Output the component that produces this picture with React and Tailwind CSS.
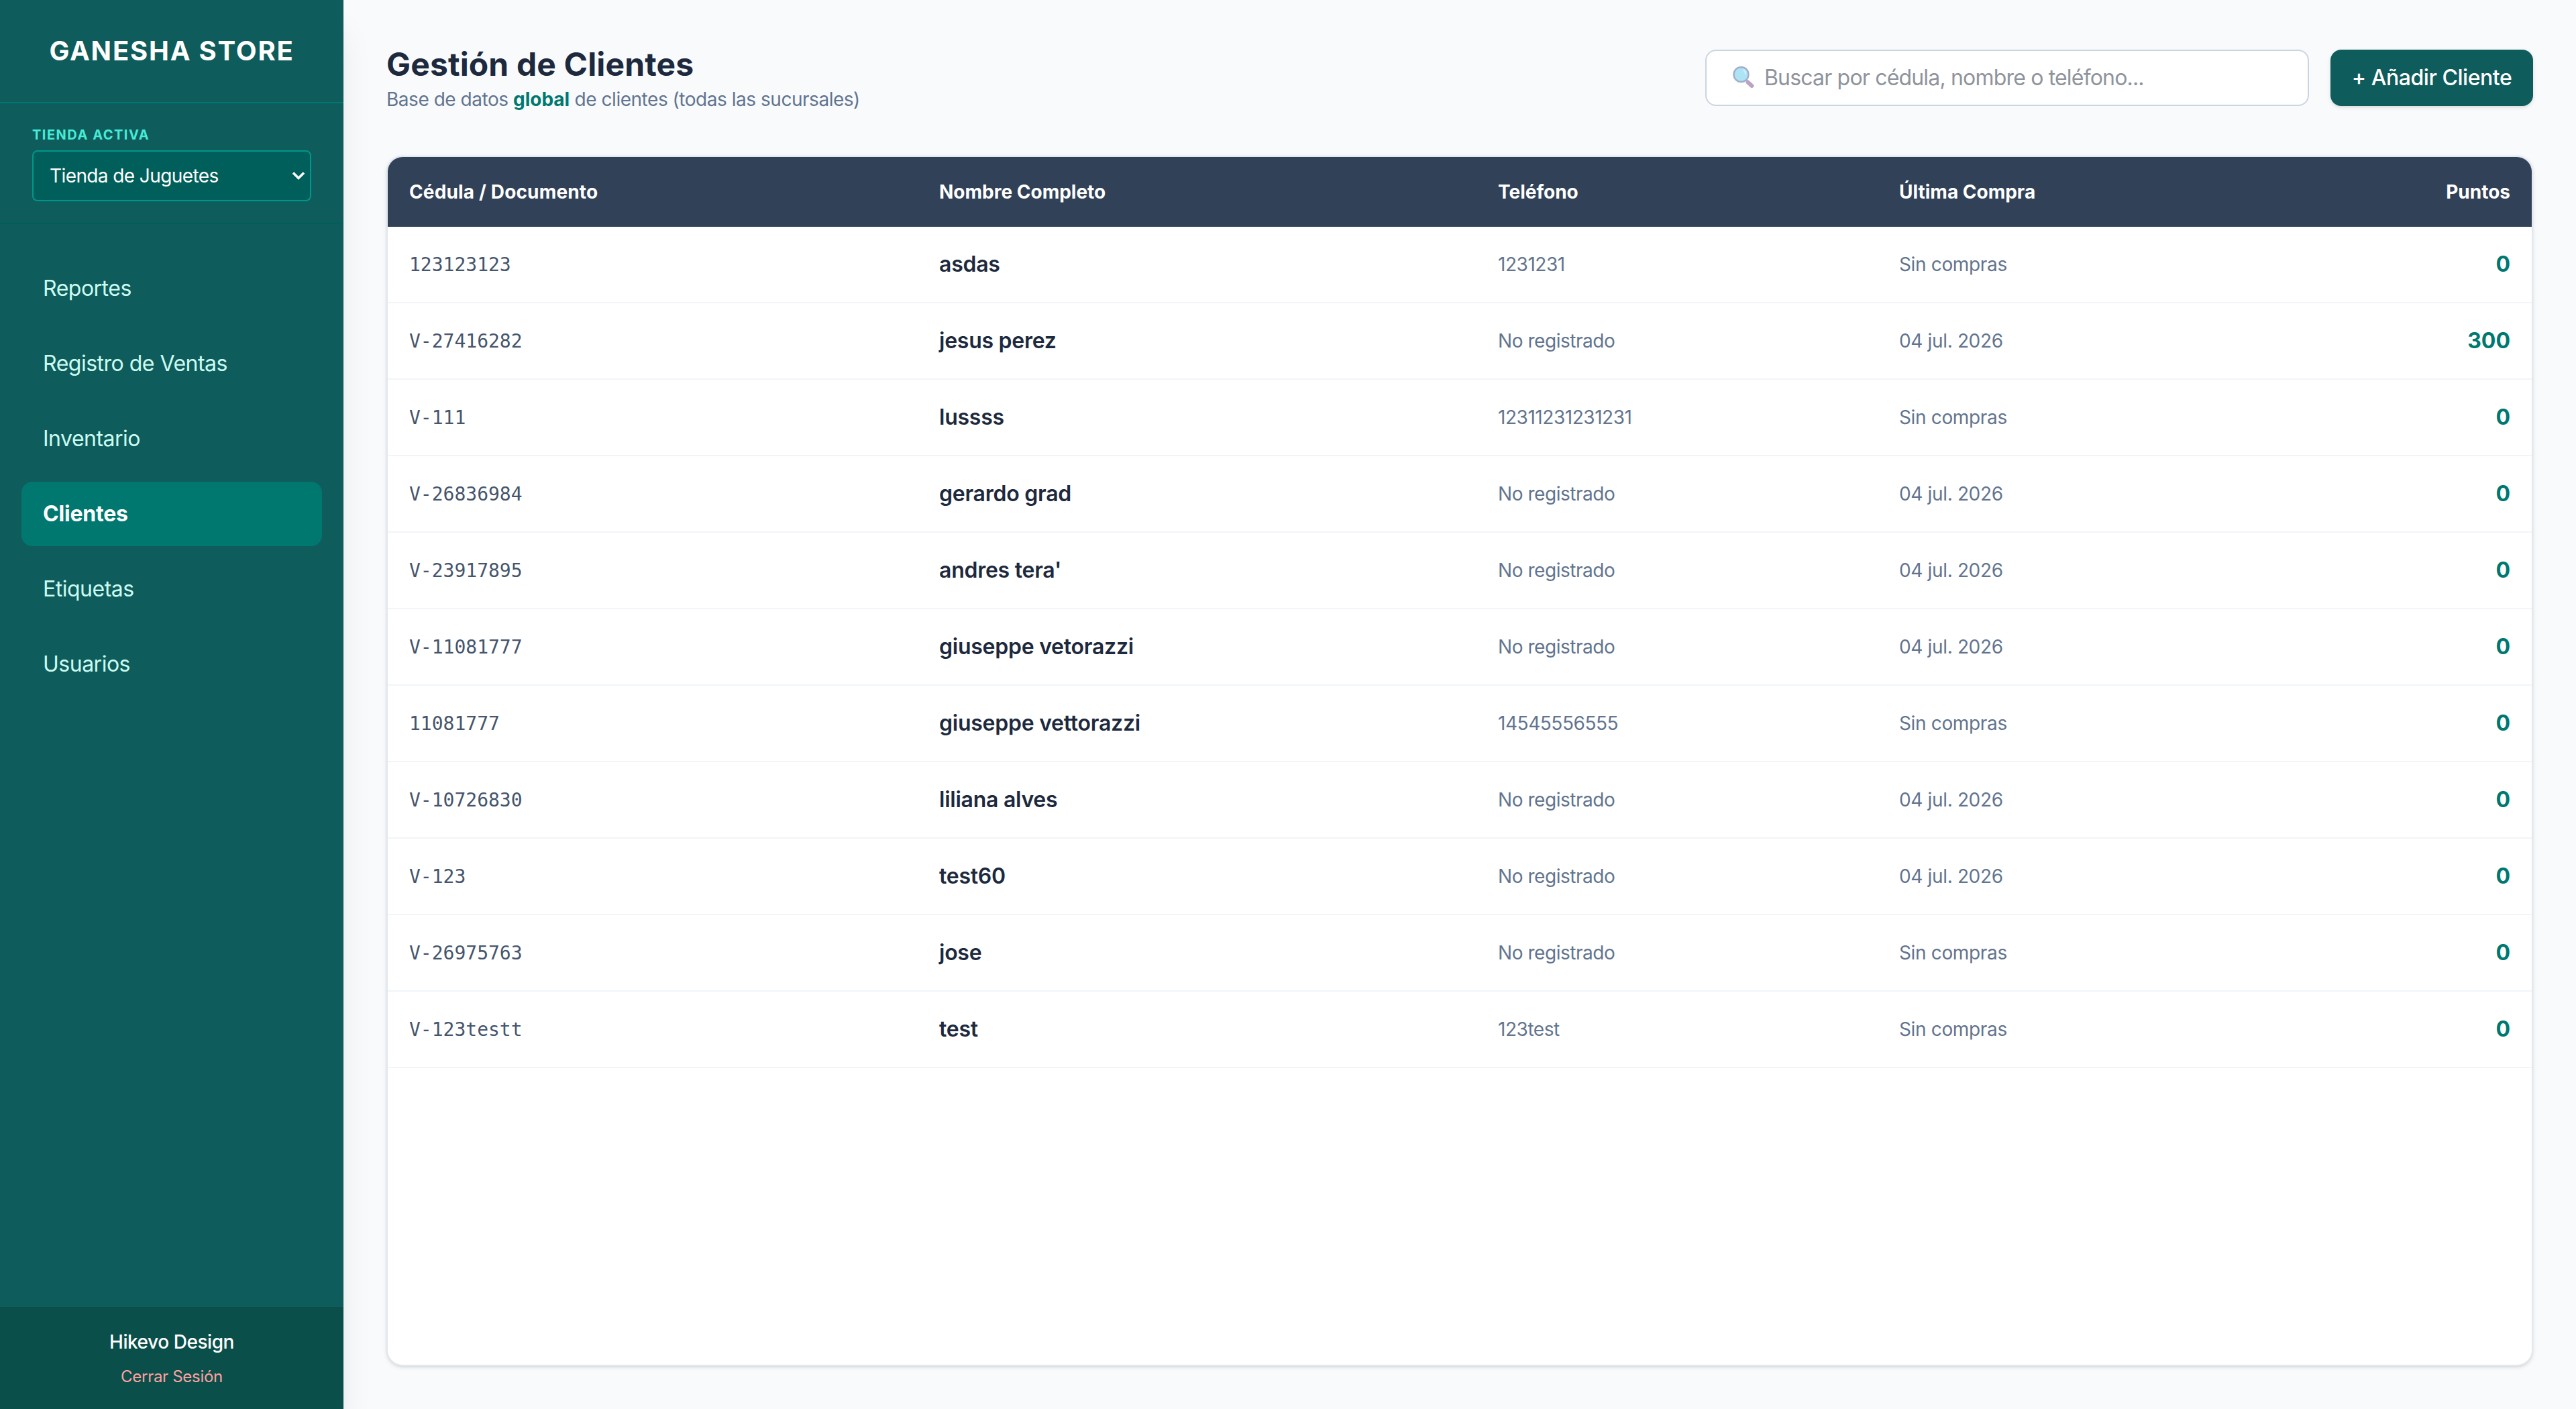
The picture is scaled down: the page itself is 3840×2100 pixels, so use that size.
import React from 'react';

const navItems = ['Reportes', 'Registro de Ventas', 'Inventario', 'Clientes', 'Etiquetas', 'Usuarios'];

const clientes = [
  { cedula: '123123123', nombre: 'asdas', telefono: '1231231', ultimaCompra: null, puntos: 0 },
  { cedula: 'V-27416282', nombre: 'jesus perez', telefono: null, ultimaCompra: '04 jul. 2026', puntos: 300 },
  { cedula: 'V-111', nombre: 'lussss', telefono: '12311231231231', ultimaCompra: null, puntos: 0 },
  { cedula: 'V-26836984', nombre: 'gerardo grad', telefono: null, ultimaCompra: '04 jul. 2026', puntos: 0 },
  { cedula: 'V-23917895', nombre: "andres tera'", telefono: null, ultimaCompra: '04 jul. 2026', puntos: 0 },
  { cedula: 'V-11081777', nombre: 'giuseppe vetorazzi', telefono: null, ultimaCompra: '04 jul. 2026', puntos: 0 },
  { cedula: '11081777', nombre: 'giuseppe vettorazzi', telefono: '14545556555', ultimaCompra: null, puntos: 0 },
  { cedula: 'V-10726830', nombre: 'liliana alves', telefono: null, ultimaCompra: '04 jul. 2026', puntos: 0 },
  { cedula: 'V-123', nombre: 'test60', telefono: null, ultimaCompra: '04 jul. 2026', puntos: 0 },
  { cedula: 'V-26975763', nombre: 'jose', telefono: null, ultimaCompra: null, puntos: 0 },
  { cedula: 'V-123testt', nombre: 'test', telefono: '123test', ultimaCompra: null, puntos: 0 },
];

const Sidebar = () => (
  <aside className="relative z-10 flex w-[512px] shrink-0 flex-col bg-[#0f5c5c] text-white shadow-[0_40px_50px_-10px_rgba(0,0,0,0.1),0_16px_20px_-12px_rgba(0,0,0,0.1)]">
    <div className="border-b-2 border-[#00786f] p-12 text-center">
      <h1 className="text-[40px] leading-[56px] font-bold tracking-[1.8px] whitespace-nowrap">GANESHA STORE</h1>
    </div>

    <div className="border-b-2 border-[#005f5a] px-12 py-8">
      <label className="mb-2 block text-[20px] leading-[30px] font-bold tracking-[1.5px] text-[#46ecd5]">
        TIENDA ACTIVA
      </label>
      <button className="flex h-[76px] w-[416px] items-center justify-between rounded-lg border-2 border-[#009689] bg-[#005f5a] pr-[7px] pl-6 text-[28px] tracking-[-0.6px]">
        <span>Tienda de Juguetes</span>
        <svg width="20" height="14" viewBox="0 0 20 14" fill="none" stroke="currentColor" strokeWidth="3.6">
          <path d="M2 2.5l8 8 8-8" />
        </svg>
      </button>
    </div>

    <nav className="flex flex-1 flex-col gap-4 px-8 py-12">
      {navItems.map((item) => (
        <a
          key={item}
          className={`rounded-2xl px-8 py-6 text-[32px] leading-[48px] ${item === 'Clientes'
              ? 'bg-[#00786f] font-bold tracking-[-0.2px] text-white'
              : 'tracking-[-0.5px] text-[#cbfbf1]'
            }`}
        >
          {item}
        </a>
      ))}
    </nav>

    <div className="bg-[#0b4f4a] p-8 text-center">
      <p className="text-[28px] leading-[40px] font-medium tracking-[-0.45px]">Hikevo Design</p>
      <button className="mt-4 block w-full text-[24px] leading-[32px] tracking-[-0.3px] text-[#ffa2a2]">
        Cerrar Sesión
      </button>
    </div>
  </aside>
);

const SearchBox = () => (
  <label className="flex h-[84px] w-[900px] items-center rounded-2xl border-2 border-[#cad5e2] bg-white pl-[38px]">
    <svg width="34" height="36" viewBox="0 0 34 36" className="mr-3.5 shrink-0">
      <path d="M21 21l4 4" stroke="#a9b3cc" strokeWidth="3" />
      <path d="M23.5 24.5l6 5.5" stroke="#bda3c2" strokeWidth="6" strokeLinecap="round" />
      <circle cx="13.5" cy="13" r="11" fill="#ade4f4" stroke="#a3aece" strokeWidth="2.4" />
      <path d="M17.5 6.5q2.5 2 2.5 5" stroke="#cdf0fa" strokeWidth="2.5" fill="none" strokeLinecap="round" />
    </svg>
    <input
      type="text"
      className="min-w-0 flex-1 text-[32px] leading-[48px] tracking-[-0.82px] outline-none placeholder:text-[#8f949c]"
      placeholder="Buscar por cédula, nombre o teléfono..."
    />
  </label>
);

const ClientesTable = ({ data }) => (
  <div className="flex-1 overflow-hidden rounded-3xl border-2 border-[#e2e8f0] bg-white shadow-[0_2px_6px_0_rgba(0,0,0,0.1),0_2px_4px_-2px_rgba(0,0,0,0.1)]">
    <table className="w-full table-fixed border-separate border-spacing-0 text-left">
      <thead className="bg-[#314158] text-[28px] leading-[40px] text-white">
        <tr>
          <th className="w-[790px] p-8 font-bold tracking-[0.15px]">Cédula / Documento</th>
          <th className="w-[833px] p-8 font-bold">Nombre Completo</th>
          <th className="w-[598px] p-8 font-bold">Teléfono</th>
          <th className="p-8 font-bold">Última Compra</th>
          <th className="p-8 text-right font-bold">Puntos</th>
        </tr>
      </thead>
      <tbody>
        {data.map((cliente) => (
          <tr key={cliente.cedula} className="h-[114px] *:border-b-2 *:border-[#f1f5f9] *:px-8">
            <td className="pt-0.5 font-['DejaVu_Sans_Mono',monospace] text-[28px] text-[#45556c]">{cliente.cedula}</td>
            <td className="text-[32px] font-semibold tracking-[-0.25px] text-[#1d293d]">{cliente.nombre}</td>
            <td className="text-[28px] tracking-[-0.45px] text-[#62748e]">{cliente.telefono ?? 'No registrado'}</td>
            <td className="text-[28px] tracking-[-0.35px] text-[#62748e]">{cliente.ultimaCompra ?? 'Sin compras'}</td>
            <td className="text-right text-[32px] font-bold text-[#00786f]">{cliente.puntos}</td>
          </tr>
        ))}
      </tbody>
    </table>
  </div>
);

const App = () => {
  return (
    <div className="flex h-[2100px] w-[3840px] overflow-hidden bg-[#f8fafc] font-[Inter,sans-serif]">
      <Sidebar />
      <main className="flex flex-1 flex-col p-16">
        <div className="mb-16 flex items-center justify-between">
          <div>
            <h2 className="text-[48px] leading-[64px] font-bold tracking-[0.14px] text-[#1d293d]">Gestión de Clientes</h2>
            <p className="text-[28px] leading-[40px] tracking-[-0.47px] text-[#62748e]">
              Base de datos <span className="font-bold tracking-normal text-[#00786f]">global</span> de clientes (todas las
              sucursales)
            </p>
          </div>
          <div className="flex gap-8">
            <SearchBox />
            <button className="h-[84px] w-[302px] rounded-2xl bg-[#0f5c5c] text-[32px] font-medium tracking-[-0.45px] whitespace-nowrap text-white shadow-[0_2px_6px_0_rgba(0,0,0,0.1),0_2px_4px_-2px_rgba(0,0,0,0.1)]">
              + Añadir Cliente
            </button>
          </div>
        </div>
        <ClientesTable data={clientes} />
      </main>
    </div>
  );
};

export default App;
